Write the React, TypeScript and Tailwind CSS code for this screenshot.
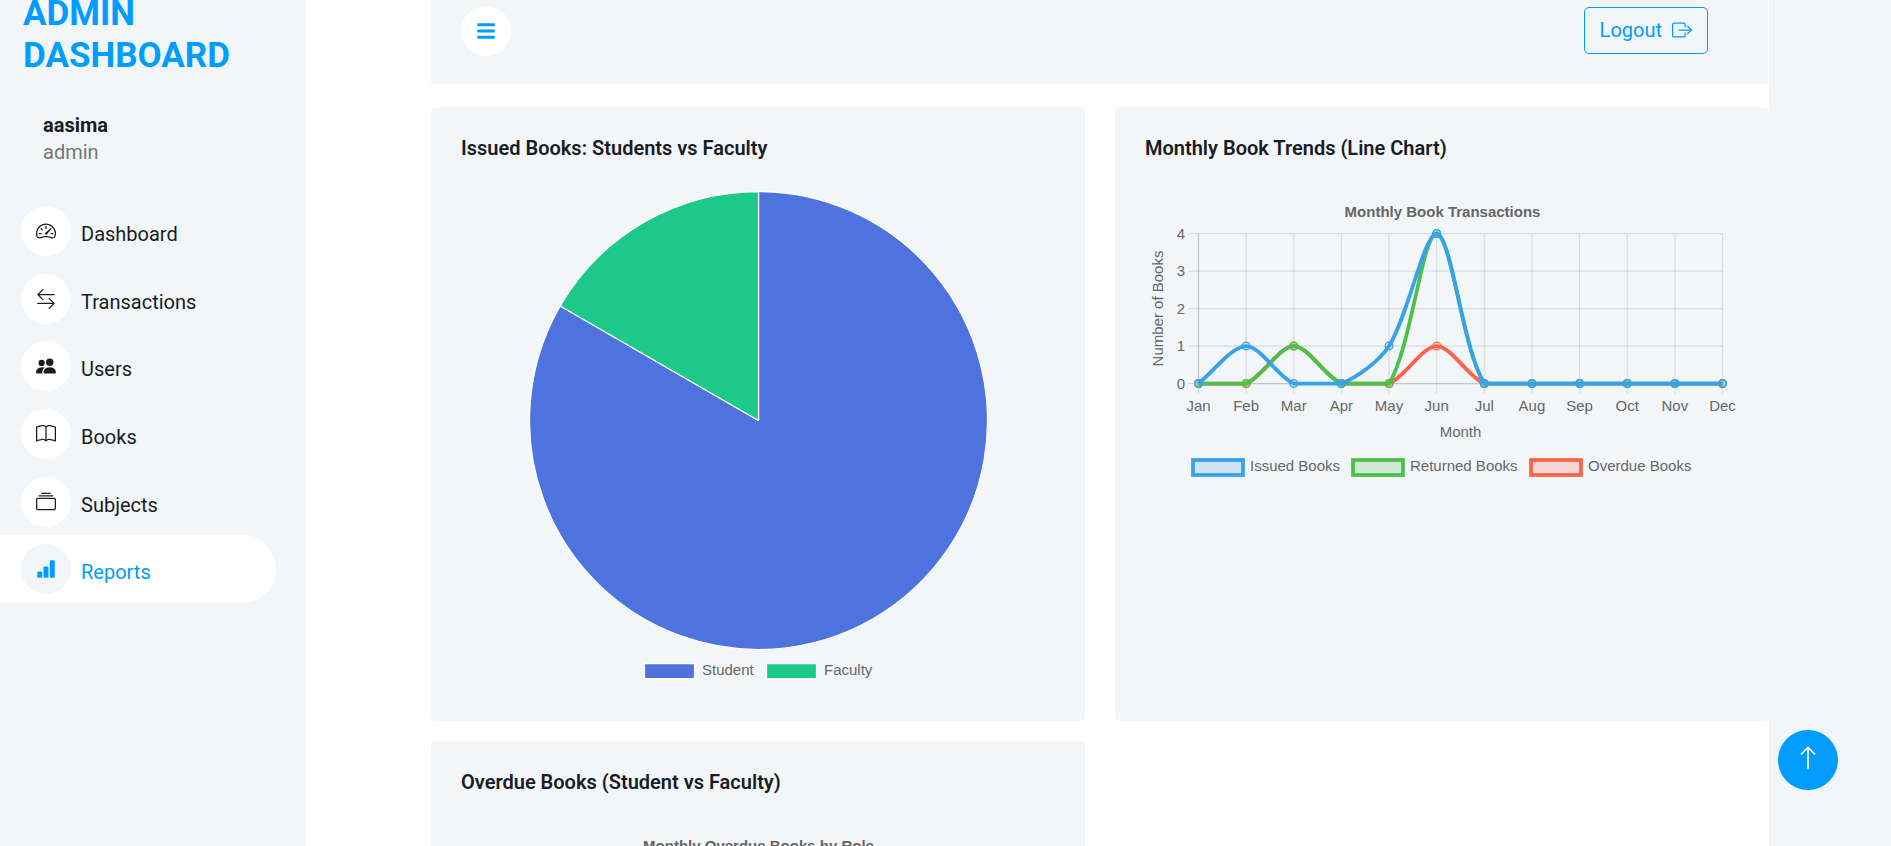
import type { ReactNode } from "react";
import {
  BsArrowLeftRight,
  BsArrowUp,
  BsBarChartFill,
  BsBook,
  BsBoxArrowRight,
  BsCollection,
  BsPeopleFill,
  BsSpeedometer2,
} from "react-icons/bs";
import { FaBars } from "react-icons/fa";

const navItems = [
  { label: "Dashboard", Icon: BsSpeedometer2 },
  { label: "Transactions", Icon: BsArrowLeftRight },
  { label: "Users", Icon: BsPeopleFill },
  { label: "Books", Icon: BsBook },
  { label: "Subjects", Icon: BsCollection },
  { label: "Reports", Icon: BsBarChartFill, active: true },
];

const months = ["Jan", "Feb", "Mar", "Apr", "May", "Jun", "Jul", "Aug", "Sep", "Oct", "Nov", "Dec"];

const series = [
  { label: "Issued Books", rgb: "54,162,235", legendX: 48, data: [0, 1, 0, 0, 1, 4, 0, 0, 0, 0, 0, 0] },
  { label: "Returned Books", rgb: "75,192,75", legendX: 208, data: [0, 0, 1, 0, 0, 4, 0, 0, 0, 0, 0, 0] },
  { label: "Overdue Books", rgb: "255,99,71", legendX: 386, data: [0, 0, 1, 0, 0, 1, 0, 0, 0, 0, 0, 0] },
];

const LEFT = 53.5;
const RIGHT = 577.5;
const TOP = 42.5;
const BOTTOM = 192.5;
const STEP = (RIGHT - LEFT) / 11;

type Point = { x: number; y: number };

const toPoint = (value: number, index: number): Point => ({
  x: LEFT + index * STEP,
  y: BOTTOM - (value * (BOTTOM - TOP)) / 4,
});

const clampY = (y: number) => Math.min(BOTTOM, Math.max(TOP, y));

// Cardinal spline with its control points held inside the plot area.
function splinePath(points: Point[], tension: number) {
  const controls = points.map((cur, i) => {
    const prev = points[i - 1] ?? cur;
    const next = points[i + 1] ?? cur;
    const d01 = Math.hypot(cur.x - prev.x, cur.y - prev.y);
    const d12 = Math.hypot(next.x - cur.x, next.y - cur.y);
    const fa = (tension * d01) / (d01 + d12);
    const fb = (tension * d12) / (d01 + d12);
    return {
      before: { x: cur.x - fa * (next.x - prev.x), y: clampY(cur.y - fa * (next.y - prev.y)) },
      after: { x: cur.x + fb * (next.x - prev.x), y: clampY(cur.y + fb * (next.y - prev.y)) },
    };
  });
  return points
    .map((p, i) => {
      if (i === 0) return `M${p.x} ${p.y}`;
      const a = controls[i - 1].after;
      const b = controls[i].before;
      return `C${a.x} ${a.y} ${b.x} ${b.y} ${p.x} ${p.y}`;
    })
    .join("");
}

const chartText = "block w-full font-['Liberation_Sans',Arial,sans-serif] text-[15px]";

function PieChart() {
  return (
    <svg viewBox="0 0 594 500" className={chartText} role="img" aria-label="Issued books by students and faculty">
      <g stroke="#fff" strokeWidth="1.25" strokeLinejoin="bevel">
        <path d="M297.5 229.5V0.5A229 229 0 1 1 99.2 115Z" fill="#4e73df" />
        <path d="M297.5 229.5L99.2 115A229 229 0 0 1 297.5 0.5Z" fill="#1cc88a" />
        <rect x="183.5" y="472.5" width="50" height="15" fill="#4e73df" />
        <rect x="305.5" y="472.5" width="50" height="15" fill="#1cc88a" />
      </g>
      <g fill="#666">
        <text x="241" y="484">Student</text>
        <text x="363" y="484">Faculty</text>
      </g>
    </svg>
  );
}

function LineChart() {
  return (
    <svg viewBox="0 0 594 297" className={chartText} role="img" aria-label="Monthly book transactions">
      <text x="297.5" y="26" textAnchor="middle" fontWeight="700" fill="#666">
        Monthly Book Transactions
      </text>
      <g stroke="#000" strokeOpacity="0.1" strokeWidth="1.25">
        {months.map((m, i) => (
          <path key={m} d={`M${LEFT + i * STEP} ${TOP}V${BOTTOM + 10}`} />
        ))}
        {[0, 1, 2, 3, 4].map((v) => (
          <path key={v} d={`M${LEFT - 10} ${BOTTOM - v * 37.5}H${RIGHT}`} />
        ))}
        <path d={`M${LEFT} ${TOP}V${BOTTOM}`} />
        <path d={`M${LEFT} ${BOTTOM}H${RIGHT}`} />
      </g>
      {[...series].reverse().map((s) => {
        const points = s.data.map(toPoint);
        return (
          <g key={s.label} stroke={`rgb(${s.rgb})`}>
            <path d={splinePath(points, 0.3)} fill="none" strokeWidth="3.75" />
            {points.map((p) => (
              <circle key={p.x} cx={p.x} cy={p.y} r="3.9" fill={`rgba(${s.rgb},0.2)`} strokeWidth="1.25" />
            ))}
          </g>
        );
      })}
      <g fill="#666">
        {[0, 1, 2, 3, 4].map((v) => (
          <text key={v} x="40" y={BOTTOM - v * 37.5 + 5} textAnchor="end">
            {v}
          </text>
        ))}
        {months.map((m, i) => (
          <text key={m} x={LEFT + i * STEP} y="220" textAnchor="middle">
            {m}
          </text>
        ))}
        <text x="315.5" y="246" textAnchor="middle">
          Month
        </text>
        <text transform="translate(18 117.5) rotate(-90)" textAnchor="middle">
          Number of Books
        </text>
        {series.map((s) => (
          <text key={s.label} x={s.legendX + 57} y="280">
            {s.label}
          </text>
        ))}
      </g>
      {series.map((s) => (
        <rect
          key={s.label}
          x={s.legendX}
          y="269"
          width="50"
          height="15"
          fill={`rgba(${s.rgb},0.2)`}
          stroke={`rgb(${s.rgb})`}
          strokeWidth="3.75"
        />
      ))}
    </svg>
  );
}

function OverdueChart() {
  return (
    <svg viewBox="0 0 594 297" className={chartText} role="img" aria-label="Monthly overdue books by role">
      <text x="297.5" y="26" textAnchor="middle" fontWeight="700" fill="#666">
        Monthly Overdue Books by Role
      </text>
    </svg>
  );
}

function Card({ title, children }: { title: string; children: ReactNode }) {
  return (
    <section className="rounded-[5px] bg-[#f3f6f9] p-[30px]">
      <h2 className="mb-8 text-xl leading-[22px] font-semibold">{title}</h2>
      {children}
    </section>
  );
}

function Sidebar() {
  return (
    <aside className="w-[306px] shrink-0 bg-[#f3f6f9]">
      <a href="#" className="-mt-[7px] block px-[23px]">
        <h1 className="text-[35px] leading-[42px] font-bold text-[#009cff]">ADMIN DASHBOARD</h1>
      </a>
      <div className="mt-9 pl-[43px]">
        <h2 className="text-xl leading-6 font-bold">aasima</h2>
        <p className="text-xl leading-[30px] text-[#757575]">admin</p>
      </div>
      <nav className="mt-[30px] mr-[30px] flex h-[406px] flex-col">
        {navItems.map(({ label, Icon, active }) => (
          <a
            key={label}
            href="#"
            aria-current={active ? "page" : undefined}
            className={
              active
                ? "flex flex-1 items-baseline gap-[10px] rounded-r-full bg-white pt-[9px] pl-[21px] text-[#009cff]"
                : "flex flex-1 items-baseline gap-[10px] pt-[9px] pl-[21px]"
            }
          >
            <span
              className={
                active
                  ? "flex size-[50px] items-center justify-center rounded-full bg-[#f3f6f9]"
                  : "flex size-[50px] items-center justify-center rounded-full bg-white"
              }
            >
              <Icon size={20} />
            </span>
            <span className="text-xl leading-[30px]">{label}</span>
          </a>
        ))}
      </nav>
    </aside>
  );
}

export default function App() {
  return (
    <div className="flex h-screen overflow-hidden bg-[#f3f6f9] font-[Roboto,sans-serif] text-[#191c24]">
      <Sidebar />
      <main className="mr-[122px] min-w-0 flex-1 bg-white pl-[125px]">
        <header className="mr-px flex h-[84px] items-start justify-between bg-[#f3f6f9] pt-[6px] pr-[60px] pl-[30px]">
          <button
            type="button"
            aria-label="Toggle sidebar"
            className="flex size-[50px] items-center justify-center rounded-full bg-white text-[#009cff]"
          >
            <FaBars size={20} />
          </button>
          <button
            type="button"
            className="mt-px flex h-[47px] items-center gap-[10px] rounded-[5px] border border-[#009cff] px-[15px] pb-[2px] text-xl text-[#009cff]"
          >
            Logout
            <BsBoxArrowRight size={20} />
          </button>
        </header>
        <div className="mt-[23px] grid grid-cols-2 gap-x-[30px] gap-y-5">
          <Card title="Issued Books: Students vs Faculty">
            <PieChart />
          </Card>
          <Card title="Monthly Book Trends (Line Chart)">
            <LineChart />
          </Card>
          <Card title="Overdue Books (Student vs Faculty)">
            <OverdueChart />
          </Card>
        </div>
      </main>
      <button
        type="button"
        aria-label="Back to top"
        className="fixed right-[53px] bottom-14 flex size-[60px] items-center justify-center rounded-full bg-[#009cff] pb-[5px] text-white"
      >
        <BsArrowUp size={26} />
      </button>
    </div>
  );
}
